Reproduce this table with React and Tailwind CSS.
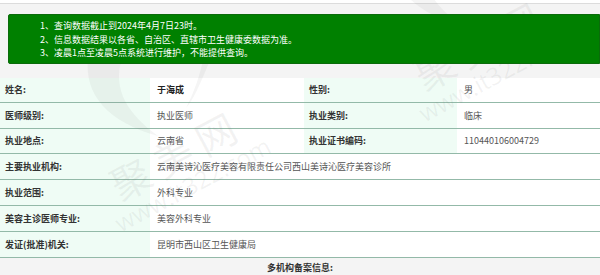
import React from 'react';

const font = "font-['Noto_Sans_CJK_SC','Noto_Sans',sans-serif]";

function Label({ children }) {
  return <div className="bg-[#effcf5] pl-[5px] flex items-center font-bold text-[#333]">{children}</div>;
}

function Value({ children, bold, span }) {
  return (
    <div className={`bg-white pl-[7px] flex items-center ${bold ? 'font-bold text-[#222]' : 'text-[#555]'} ${span ? 'col-span-3' : ''}`}>
      {children}
    </div>
  );
}

function Row({ h, children }) {
  return (
    <div className={`grid grid-cols-[150px_154px_153px_1fr] border-b border-[#93b9a8] ${h}`}>
      {children}
    </div>
  );
}

function Watermark({ className }) {
  return (
    <div className={`absolute pointer-events-none -rotate-[28deg] text-[rgba(120,120,120,0.09)] flex flex-col items-center ${className}`}>
      <div className="text-[40px] leading-[44px] tracking-[8px]">聚美网</div>
      <div className="text-[24px] leading-[26px] font-['Open_Sans',sans-serif]">www.it322.com</div>
    </div>
  );
}

// leaf mark of the watermark, drawn for the left copy; the right copy is shifted
function Leaf({ dx = 0, dy = 0 }) {
  return (
    <g transform={`translate(${dx} ${dy})`} fill="rgba(110,110,110,0.07)">
      <path d="M88 58 C84 95 108 122 158 136 C128 114 112 90 122 58 Z" />
      <path d="M204 56 C200 75 195 90 186 108 C193 100 200 85 210 60 Z" />
    </g>
  );
}

export default function App() {
  return (
    <div className={`w-[600px] h-[275px] bg-[#f4f4f4] relative overflow-hidden text-[9px] ${font}`}>
      <div className="h-[4px] bg-white border-b border-[#dcdcdc]" />

      <div className="pt-[10px] pl-2 relative z-10">
        <div className="h-[50px] bg-[#008000] border border-[#0b6b0b] rounded-l-[2px] pl-[31px] pt-[4px] text-white leading-[13.5px]">
          <p>1、查询数据截止到2024年4月7日23时。</p>
          <p>2、信息数据结果以各省、自治区、直辖市卫生健康委数据为准。</p>
          <p>3、凌晨1点至凌晨5点系统进行维护，不能提供查询。</p>
        </div>
      </div>

      <div className="mt-[14px]">
        <Row h="h-[25px]">
          <Label>姓名:</Label>
          <Value bold>于海成</Value>
          <Label>性别:</Label>
          <Value>男</Value>
        </Row>
        <Row h="h-[26px]">
          <Label>医师级别:</Label>
          <Value>执业医师</Value>
          <Label>执业类别:</Label>
          <Value>临床</Value>
        </Row>
        <Row h="h-[25px]">
          <Label>执业地点:</Label>
          <Value>云南省</Value>
          <Label>执业证书编码:</Label>
          <Value>110440106004729</Value>
        </Row>
        <Row h="h-[26px]">
          <Label>主要执业机构:</Label>
          <Value span>云南美诗沁医疗美容有限责任公司西山美诗沁医疗美容诊所</Value>
        </Row>
        <Row h="h-[26px]">
          <Label>执业范围:</Label>
          <Value span>外科专业</Value>
        </Row>
        <Row h="h-[26px]">
          <Label>美容主诊医师专业:</Label>
          <Value span>美容外科专业</Value>
        </Row>
        <Row h="h-[26px]">
          <Label>发证(批准)机关:</Label>
          <Value span>昆明市西山区卫生健康局</Value>
        </Row>
        <div className="h-[20px] flex items-center justify-center font-bold text-[#333]">多机构备案信息:</div>
      </div>

      <svg className="absolute inset-0 pointer-events-none" width="600" height="275" viewBox="0 0 600 275">
        <Leaf />
        <Leaf dx={304} dy={-110} />
      </svg>
      <Watermark className="left-[400px] top-[20px]" />
      <Watermark className="left-[96px] top-[130px]" />
    </div>
  );
}
